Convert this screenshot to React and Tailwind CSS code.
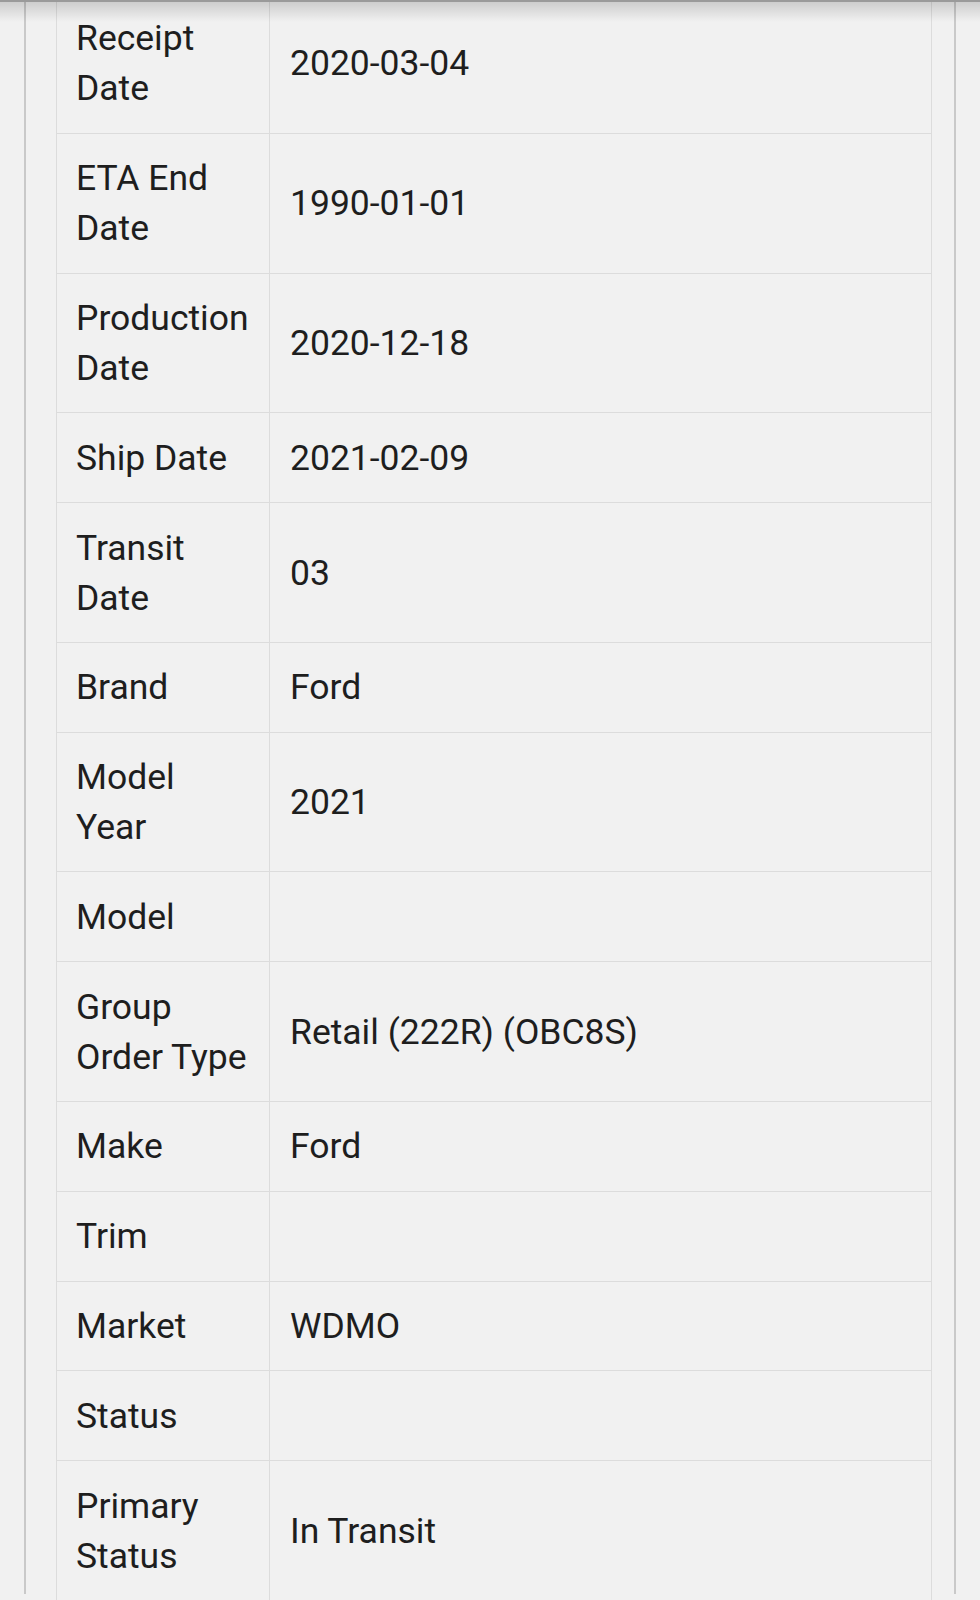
import React from 'react';

const rows = [
  ['Receipt Date', '2020-03-04'],
  ['ETA End Date', '1990-01-01'],
  ['Production Date', '2020-12-18'],
  ['Ship Date', '2021-02-09'],
  ['Transit Date', '03'],
  ['Brand', 'Ford'],
  ['Model Year', '2021'],
  ['Model', ''],
  ['Group Order Type', 'Retail (222R) (OBC8S)'],
  ['Make', 'Ford'],
  ['Trim', ''],
  ['Market', 'WDMO'],
  ['Status', ''],
  ['Primary Status', 'In Transit'],
];

export default function App() {
  return (
    <div className="relative h-[1600px] overflow-hidden bg-[#f1f1f1] font-['Roboto',sans-serif] text-[#1e1e1e]">
      {/* header shadow */}
      <div className="absolute inset-x-0 top-0 z-10 h-[22px] border-t-2 border-[#9a9a9a] bg-gradient-to-b from-black/15 to-transparent" />

      <div className="mx-[24px] h-full border-x-2 border-[#c9c9c9]">
        <div className="ml-[30px] mr-[22px] -mt-[6px] border-x-[1.5px] border-[#dcdcdc] text-[35.5px] leading-[50px]">
          {rows.map(([label, value]) => (
            <div key={label} className="flex border-b-[1.5px] border-[#dcdcdc]">
              <div className="w-[213px] shrink-0 border-r-[1.5px] border-[#dcdcdc] py-[19.4px] pl-[19px] pr-[18px]">
                {label}
              </div>
              <div className="flex flex-1 items-center py-[19.4px] pl-[20px]">{value}</div>
            </div>
          ))}
        </div>
      </div>
    </div>
  );
}
